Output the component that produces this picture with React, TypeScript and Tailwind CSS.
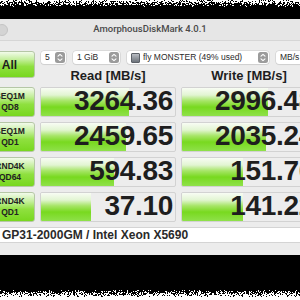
import React from "react";

type Row = { l1: string; l2: string; read: string; rw: number; write: string; ww: number };

const rows: Row[] = [
  { l1: "SEQ1M", l2: "QD8", read: "3264.36", rw: 88, write: "2996.48", ww: 86 },
  { l1: "SEQ1M", l2: "QD1", read: "2459.65", rw: 85, write: "2035.24", ww: 84 },
  { l1: "RND4K", l2: "QD64", read: "594.83", rw: 73, write: "151.76", ww: 61 },
  { l1: "RND4K", l2: "QD1", read: "37.10", rw: 50, write: "141.22", ww: 61 },
];

const barGreen =
  "bg-[linear-gradient(to_bottom,#f8fcf4_0%,#e2f5d2_25%,#a6e566_46%,#78d91f_68%,#8fe14a_100%)]";
const btnGreen =
  "bg-[linear-gradient(to_bottom,#f2fbea_0%,#c4ef9c_30%,#8fe03f_58%,#78d71f_100%)]";

// dithered screenshot edge
function Noise({ h, from, to, seed }: { h: number; from: number; to: number; seed: number }) {
  let s = seed;
  const rand = () => {
    s = (s * 1103515245 + 12345) & 0x7fffffff;
    return s / 0x7fffffff;
  };
  const rects: React.ReactNode[] = [];
  for (let y = 0; y < h; y++) {
    const p = from + ((to - from) * y) / (h - 1);
    let start = -1;
    for (let x = 0; x <= 300; x++) {
      const on = x < 300 && rand() < p;
      if (on && start < 0) start = x;
      if (!on && start >= 0) {
        rects.push(<rect key={`${y}-${start}`} x={start} y={y} width={x - start} height={1} />);
        start = -1;
      }
    }
  }
  return (
    <svg width={300} height={h} className="block shrink-0 bg-white" fill="#000">
      {rects}
    </svg>
  );
}

function Stepper() {
  return (
    <svg width="10" height="11" viewBox="0 0 10 11" className="shrink-0">
      <rect x="0" y="0" width="10" height="11" rx="2.5" fill="#9b9b9b" />
      <path d="M3 4.2 L5 2.4 L7 4.2" stroke="#fff" strokeWidth="1.1" fill="none" strokeLinecap="round" strokeLinejoin="round" />
      <path d="M3 6.8 L5 8.6 L7 6.8" stroke="#fff" strokeWidth="1.1" fill="none" strokeLinecap="round" strokeLinejoin="round" />
    </svg>
  );
}

function Select({ w, children, icon }: { w: string; children: React.ReactNode; icon?: boolean }) {
  return (
    <div
      className={`${w} h-[13px] shrink-0 flex items-center gap-[3px] rounded-[3px] bg-white pl-[4px] pr-[1px] shadow-[0_0_0_0.5px_#c8c8c8,0_1px_1px_rgba(0,0,0,0.08)]`}
    >
      {icon && (
        <span className="w-[9px] h-[10px] rounded-[1px] bg-[linear-gradient(to_bottom,#b8bcc2,#6d737b)] border border-[#5c6168] shrink-0" />
      )}
      <span className="flex-1 whitespace-nowrap overflow-hidden text-[8.5px] leading-none text-[#2a2a2a]">{children}</span>
      <Stepper />
    </div>
  );
}

function ValueBox({ value, pct }: { value: string; pct: number }) {
  return (
    <div className="relative w-[136px] h-[30px] shrink-0 rounded-[2px] border border-[#d2d2d2] bg-[#ededed] overflow-hidden">
      <div className={`absolute left-0 top-0 bottom-0 ${barGreen}`} style={{ width: pct }} />
      <div className="relative h-full flex items-center justify-end pr-[2px] pb-[3px] text-[28px] font-bold leading-none text-[#1e1e1e] tracking-[-0.3px]">
        {value}
      </div>
    </div>
  );
}

export default function App() {
  return (
    <div
      className="w-[300px] h-[300px] overflow-hidden bg-black flex flex-col"
      style={{ fontFamily: '"Liberation Sans", Arial, sans-serif' }}
    >
      <Noise h={7} from={0.15} to={0.95} seed={7} />
      <div className="h-[12px] shrink-0 bg-black" />

      <div className="-ml-[20px] w-[340px] shrink-0 bg-[#ececec] flex flex-col">
        {/* title bar */}
        <div className="relative h-[22px] flex items-center justify-center bg-[#e6e6e6] border-b border-[#d6d6d6]">
          <div className="absolute left-[1px] top-[5px] flex gap-[3px]">
            <span className="w-[12px] h-[12px] rounded-full bg-[#d4d4d4] border border-[#c4c4c4]" />
            <span className="w-[12px] h-[12px] rounded-full bg-[#d4d4d4] border border-[#c4c4c4]" />
          </div>
          <span className="text-[9.5px] font-medium text-[#4a4a4a]" style={{ fontFamily: "Roboto, sans-serif" }}>
            AmorphousDiskMark 4.0.1
          </span>
        </div>

        <div className="pl-[4px] pt-[10px] pb-[12px] flex flex-col">
          <div className="flex gap-[5px] h-[36px]">
            <button
              className={`w-[51px] h-[27px] shrink-0 rounded-[3px] border border-[#b5c7a6] ${btnGreen} text-[12px] font-bold text-[#1e1e1e]`}
            >
              All
            </button>
            <div className="flex flex-col">
              <div className="flex items-center pl-[1px] gap-[7px]">
                <Select w="w-[25px]">5</Select>
                <Select w="w-[47px]">1 GiB</Select>
                <Select w="w-[142px]" icon>
                  fly MONSTER (49% used)
                </Select>
                <Select w="w-[50px]">MB/s</Select>
              </div>
              <div className="flex flex-1 items-center gap-[5px] pt-[1px]">
                <div className="w-[136px] text-center text-[13px] font-bold text-[#1e1e1e]">Read [MB/s]</div>
                <div className="w-[136px] text-center text-[13px] font-bold text-[#1e1e1e]">Write [MB/s]</div>
              </div>
            </div>
          </div>

          <div className="flex flex-col gap-[5px]">
            {rows.map((r, i) => (
              <div key={i} className="flex gap-[5px]">
                <div
                  className={`w-[51px] h-[30px] shrink-0 rounded-[3px] border border-[#b5c7a6] ${btnGreen} flex flex-col items-center justify-center pl-[1px] text-[8.5px] font-bold leading-[11px] text-[#222]`}
                >
                  <span>{r.l1}</span>
                  <span>{r.l2}</span>
                </div>
                <ValueBox value={r.read} pct={r.rw} />
                <ValueBox value={r.write} pct={r.ww} />
              </div>
            ))}
          </div>

          <div className="mt-[5px] -ml-[4px] h-[16px] bg-white border-y border-[#d4d4d4] flex items-center pl-[22px] text-[12px] font-bold text-[#2a2a2a]">
            GP31-2000GM / Intel Xeon X5690
          </div>
        </div>
      </div>

      <div className="flex-1 bg-black" />
      <Noise h={7} from={0.9} to={0.1} seed={31} />
      <div className="h-[3px] shrink-0 bg-white" />
    </div>
  );
}
